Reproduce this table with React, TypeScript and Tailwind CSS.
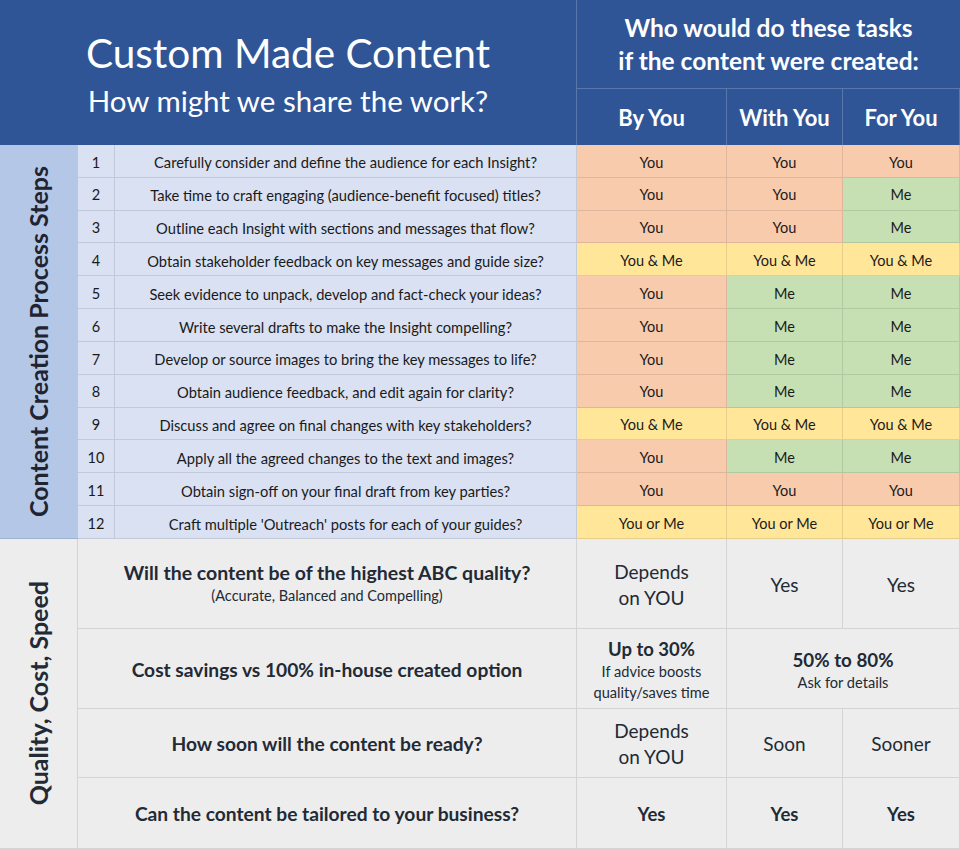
const FONT = "font-['Lato','Open_Sans',sans-serif]";

type Who = "You" | "Me" | "You & Me" | "You or Me";

const STEPS: [number, string, Who[]][] = [
  [1, "Carefully consider and define the audience for each Insight?", ["You", "You", "You"]],
  [2, "Take time to craft engaging (audience-benefit focused) titles?", ["You", "You", "Me"]],
  [3, "Outline each Insight with sections and messages that flow?", ["You", "You", "Me"]],
  [4, "Obtain stakeholder feedback on key messages and guide size?", ["You & Me", "You & Me", "You & Me"]],
  [5, "Seek evidence to unpack, develop and fact-check your ideas?", ["You", "Me", "Me"]],
  [6, "Write several drafts to make the Insight compelling?", ["You", "Me", "Me"]],
  [7, "Develop or source images to bring the key messages to life?", ["You", "Me", "Me"]],
  [8, "Obtain audience feedback, and edit again for clarity?", ["You", "Me", "Me"]],
  [9, "Discuss and agree on final changes with key stakeholders?", ["You & Me", "You & Me", "You & Me"]],
  [10, "Apply all the agreed changes to the text and images?", ["You", "Me", "Me"]],
  [11, "Obtain sign-off on your final draft from key parties?", ["You", "You", "You"]],
  [12, "Craft multiple 'Outreach' posts for each of your guides?", ["You or Me", "You or Me", "You or Me"]],
];

const FILL: Record<Who, string> = {
  You: "bg-[#f8cbad]",
  Me: "bg-[#c6e0b4]",
  "You & Me": "bg-[#ffe699]",
  "You or Me": "bg-[#ffe699]",
};

const cell = "flex items-center justify-center text-center border-r border-b border-black/10";
const gray = `${cell} bg-[#ededed] border-[#d4d4d4]`;

export default function App() {
  return (
    <div className={`${FONT} w-[960px] h-[849px] bg-white overflow-hidden`}>
      <div className="grid grid-cols-[78px_37px_462px_150px_116px_117px] grid-rows-[89px_56px_repeat(12,32.83px)_90px_80px_69px_70px] border-b border-[#d4d4d4]">
        {/* Header */}
        <div className="col-span-3 row-span-2 bg-[#2f5597] text-white flex flex-col items-center justify-center border-r border-white/20 pt-1">
          <div className="text-[40.5px] leading-[48px]">Custom Made Content</div>
          <div className="text-[29.5px] leading-[40px] mt-1">How might we share the work?</div>
        </div>
        <div className="col-span-3 bg-[#2f5597] text-white font-bold text-[24.5px] leading-[33px] flex flex-col items-center justify-center border-b border-white/20">
          <span>Who would do these tasks</span>
          <span>if the content were created:</span>
        </div>
        {["By You", "With You", "For You"].map((h) => (
          <div key={h} className="bg-[#2f5597] text-white font-bold text-[22px] flex items-center justify-center border-r border-white/20">
            {h}
          </div>
        ))}

        {/* Process steps */}
        <div className="row-span-12 bg-[#b4c7e7] flex items-center justify-center border-b border-black/10">
          <span className="[writing-mode:vertical-rl] rotate-180 font-bold text-[25px] text-[#1f2430] whitespace-nowrap">
            Content Creation Process Steps
          </span>
        </div>
        {STEPS.map(([n, task, who]) => (
          <div key={n} className="contents">
            <div className={`${cell} bg-[#d9e1f2] text-[14.5px] text-[#1a1a1a] pt-[3px]`}>{n}</div>
            <div className={`${cell} bg-[#d9e1f2] text-[14.7px] text-[#1a1a1a] pt-[3px]`}>{task}</div>
            {who.map((w, i) => (
              <div key={i} className={`${cell} ${FILL[w]} text-[14.5px] text-[#1a1a1a] pt-[3px]`}>{w}</div>
            ))}
          </div>
        ))}

        {/* Quality, cost, speed */}
        <div className="row-span-4 bg-[#ededed] flex items-center justify-center border-r border-[#d4d4d4]">
          <span className="[writing-mode:vertical-rl] rotate-180 font-bold text-[25px] text-[#222a35] whitespace-nowrap">
            Quality, Cost, Speed
          </span>
        </div>

        <div className={`${gray} col-span-2 flex-col text-[#222a35]`}>
          <span className="font-bold text-[19.5px] leading-[26px]">Will the content be of the highest ABC quality?</span>
          <span className="text-[14.5px] leading-[20px]">(Accurate, Balanced and Compelling)</span>
        </div>
        <div className={`${gray} text-[19px] leading-[26px] text-[#222a35] pt-[3px]`}>Depends<br />on YOU</div>
        <div className={`${gray} text-[19px] text-[#222a35] pt-[3px]`}>Yes</div>
        <div className={`${gray} text-[19px] text-[#222a35] pt-[3px]`}>Yes</div>

        <div className={`${gray} col-span-2 font-bold text-[19.2px] text-[#222a35] pt-[3px]`}>
          Cost savings vs 100% in-house created option
        </div>
        <div className={`${gray} flex-col text-[#222a35] pt-1`}>
          <span className="font-bold text-[18.5px] leading-[23px]">Up to 30%</span>
          <span className="text-[14.6px] leading-[21px]">If advice boosts</span>
          <span className="text-[14.6px] leading-[21px]">quality/saves time</span>
        </div>
        <div className={`${gray} col-span-2 flex-col text-[#222a35] pt-1`}>
          <span className="font-bold text-[18.8px] leading-[24px]">50% to 80%</span>
          <span className="text-[14.6px] leading-[21px]">Ask for details</span>
        </div>

        <div className={`${gray} col-span-2 font-bold text-[19.2px] text-[#222a35] pt-[3px]`}>
          How soon will the content be ready?
        </div>
        <div className={`${gray} text-[19px] leading-[26px] text-[#222a35] pt-[3px]`}>Depends<br />on YOU</div>
        <div className={`${gray} text-[19px] text-[#222a35] pt-[3px]`}>Soon</div>
        <div className={`${gray} text-[19px] text-[#222a35] pt-[3px]`}>Sooner</div>

        <div className={`${gray} col-span-2 font-bold text-[19.2px] text-[#222a35] border-b-0 pt-[3px]`}>
          Can the content be tailored to your business?
        </div>
        <div className={`${gray} font-bold text-[18.5px] text-[#222a35] border-b-0 pt-[3px]`}>Yes</div>
        <div className={`${gray} font-bold text-[18.5px] text-[#222a35] border-b-0 pt-[3px]`}>Yes</div>
        <div className={`${gray} font-bold text-[18.5px] text-[#222a35] border-b-0 pt-[3px]`}>Yes</div>
      </div>
    </div>
  );
}
